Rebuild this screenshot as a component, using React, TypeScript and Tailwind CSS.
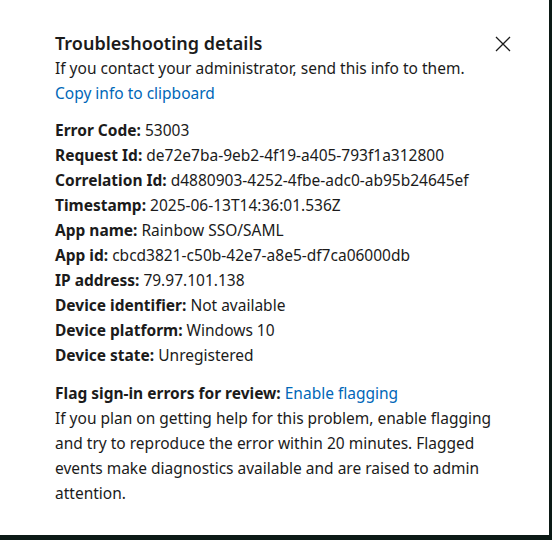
import React from "react";

const details: [string, string][] = [
  ["Error Code", "53003"],
  ["Request Id", "de72e7ba-9eb2-4f19-a405-793f1a312800"],
  ["Correlation Id", "d4880903-4252-4fbe-adc0-ab95b24645ef"],
  ["Timestamp", "2025-06-13T14:36:01.536Z"],
  ["App name", "Rainbow SSO/SAML"],
  ["App id", "cbcd3821-c50b-42e7-a8e5-df7ca06000db"],
  ["IP address", "79.97.101.138"],
  ["Device identifier", "Not available"],
  ["Device platform", "Windows 10"],
  ["Device state", "Unregistered"],
];

export default function App() {
  return (
    <div className="h-[540px] w-[552px] bg-[#0c1a16]">
      <div
        className="relative h-[535px] w-[549px] bg-white pl-[55px] pr-6 pt-[31px] text-[15.5px] leading-[25px] text-[#1b1b1b]"
        style={{ fontFamily: '"Noto Sans", "Open Sans", sans-serif' }}
      >
        <button
          type="button"
          className="absolute right-[38px] top-[36px] flex h-4 w-4 items-center justify-center text-[#1b1b1b]"
          aria-label="Close"
        >
          <svg width="16" height="16" viewBox="0 0 16 16" fill="none">
            <path d="M1 1L15 15M15 1L1 15" stroke="currentColor" strokeWidth="1.3" />
          </svg>
        </button>

        <h2 className="text-[18px] font-semibold leading-6">Troubleshooting details</h2>
        <p className="mt-px">If you contact your administrator, send this info to them.</p>
        <p className="text-[#0067b8]">Copy info to clipboard</p>

        <div className="mt-3">
          {details.map(([label, value]) => (
            <p key={label}>
              <span className="font-bold">{label}:</span> {value}
            </p>
          ))}
        </div>

        <div className="mt-[13px]">
          <p>
            <span className="font-bold">Flag sign-in errors for review:</span>{" "}
            <span className="text-[#0067b8]">Enable flagging</span>
          </p>
          <p className="w-[445px]">
            If you plan on getting help for this problem, enable flagging and try to reproduce the
            error within 20 minutes. Flagged events make diagnostics available and are raised to
            admin attention.
          </p>
        </div>
      </div>
    </div>
  );
}
